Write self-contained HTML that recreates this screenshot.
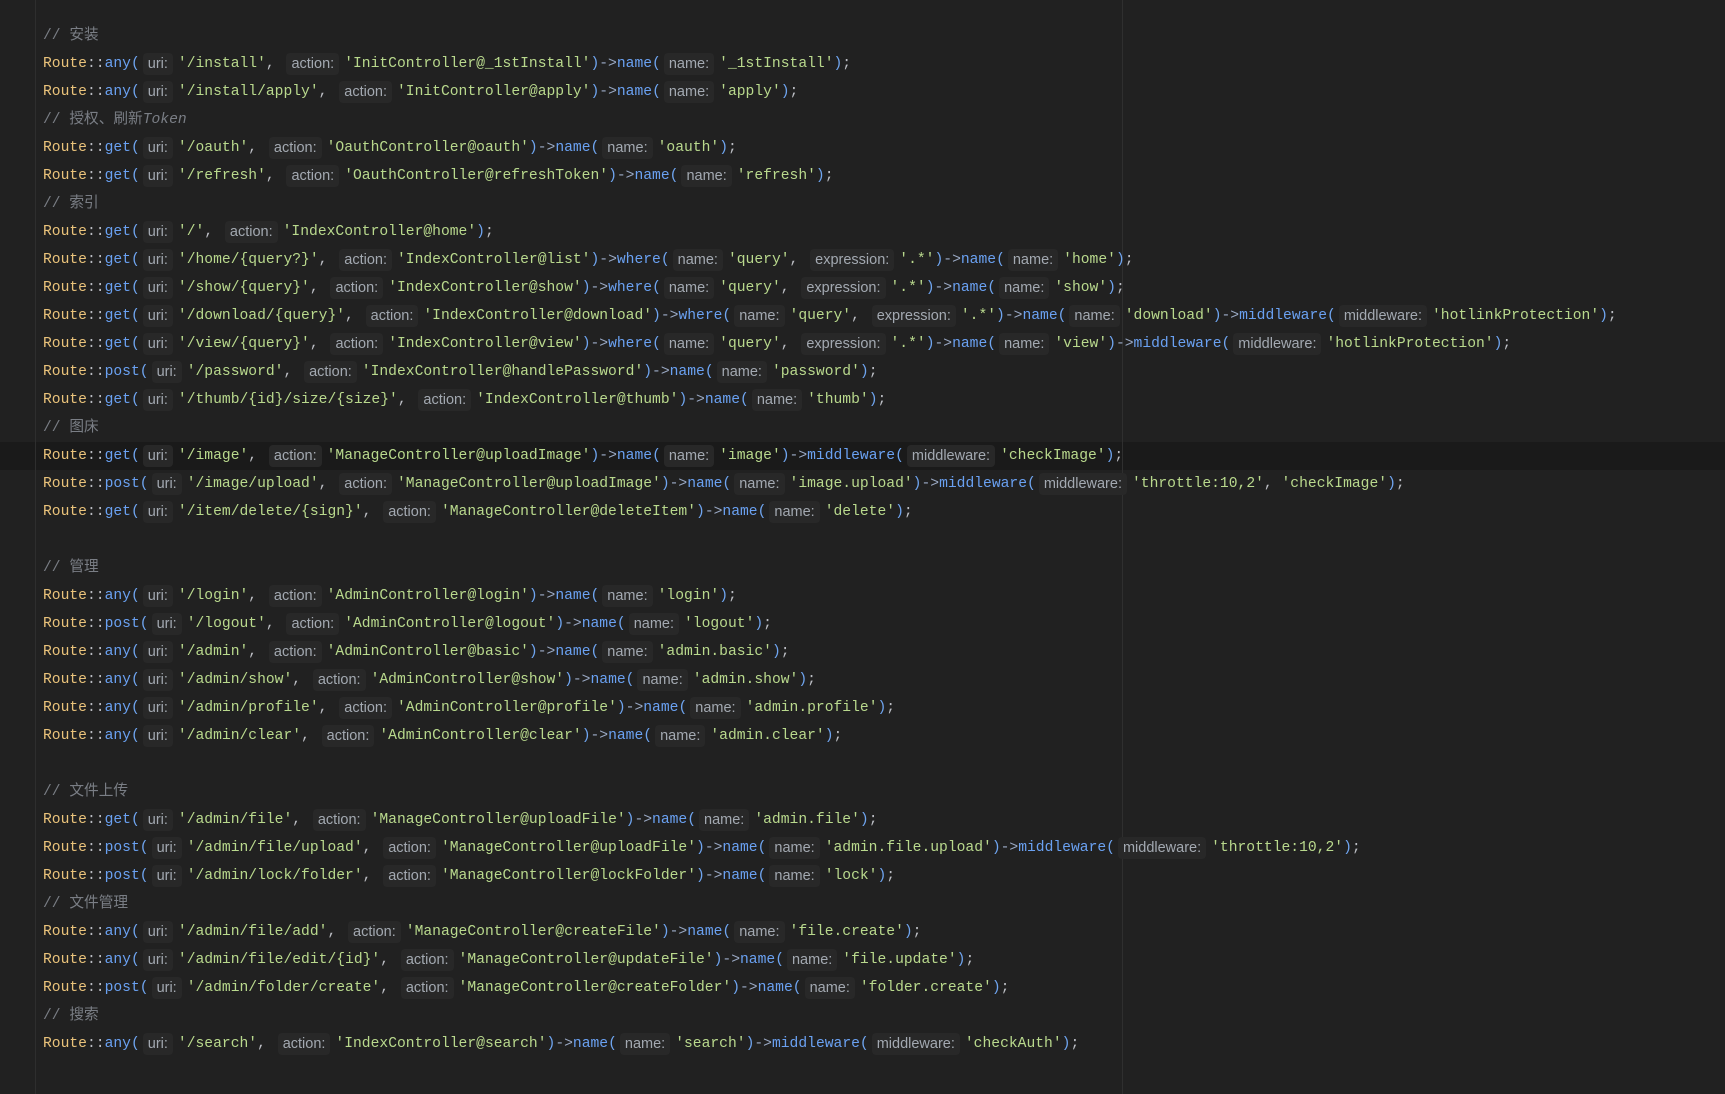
<!DOCTYPE html>
<html><head><meta charset="utf-8"><style>
html,body{margin:0;padding:0;background:#212121;width:1725px;height:1094px;overflow:hidden}
.ed{position:relative;width:1725px;height:1094px;background:#212121}
.gut{position:absolute;left:35px;top:0;width:1px;height:1094px;background:#2e2e2e}
.rm{position:absolute;left:1122px;top:0;width:1px;height:1094px;background:#2f2f2f}
.hl{position:absolute;left:0;top:442px;width:1725px;height:28px;background:#1a1a1a}
.l{position:absolute;left:43px;height:28px;line-height:30px;white-space:pre;font-family:"Liberation Mono","Noto Sans CJK SC",monospace;font-size:14.67px;color:#bcbec4}
.y{color:#eac37b}.f{color:#6aa1f2}.p{color:#6fa5f0}.a{color:#9aa9c4}.s{color:#b9d98d}.c{color:#7a7e85}
.c i{font-style:italic}
.cj{font-family:"Liberation Mono","Noto Sans CJK SC",sans-serif}
.h{display:inline-block;font-style:normal;font-family:"Liberation Sans",sans-serif;font-size:14.5px;color:#a3a9b1;background:#282828;border-radius:4px;height:22px;line-height:22px;padding:0 5px;margin:0 5px 0 3px;vertical-align:top;margin-top:4px}
</style></head><body><div class="ed">
<div class="hl"></div><div class="gut"></div><div class="rm"></div>
<div class="l c" style="top:21px">// <span class="cj">安装</span></div>
<div class="l" style="top:49px"><span class="y">Route</span>::<span class="f">any</span><span class="p">(</span><i class="h">uri:</i><span class="s">'/install'</span>, <i class="h">action:</i><span class="s">'InitController@_1stInstall'</span><span class="p">)</span><span class="a">-&gt;</span><span class="f">name</span><span class="p">(</span><i class="h">name:</i><span class="s">'_1stInstall'</span><span class="p">)</span>;</div>
<div class="l" style="top:77px"><span class="y">Route</span>::<span class="f">any</span><span class="p">(</span><i class="h">uri:</i><span class="s">'/install/apply'</span>, <i class="h">action:</i><span class="s">'InitController@apply'</span><span class="p">)</span><span class="a">-&gt;</span><span class="f">name</span><span class="p">(</span><i class="h">name:</i><span class="s">'apply'</span><span class="p">)</span>;</div>
<div class="l c" style="top:105px">// <span class="cj">授权、刷新</span><i>Token</i></div>
<div class="l" style="top:133px"><span class="y">Route</span>::<span class="f">get</span><span class="p">(</span><i class="h">uri:</i><span class="s">'/oauth'</span>, <i class="h">action:</i><span class="s">'OauthController@oauth'</span><span class="p">)</span><span class="a">-&gt;</span><span class="f">name</span><span class="p">(</span><i class="h">name:</i><span class="s">'oauth'</span><span class="p">)</span>;</div>
<div class="l" style="top:161px"><span class="y">Route</span>::<span class="f">get</span><span class="p">(</span><i class="h">uri:</i><span class="s">'/refresh'</span>, <i class="h">action:</i><span class="s">'OauthController@refreshToken'</span><span class="p">)</span><span class="a">-&gt;</span><span class="f">name</span><span class="p">(</span><i class="h">name:</i><span class="s">'refresh'</span><span class="p">)</span>;</div>
<div class="l c" style="top:189px">// <span class="cj">索引</span></div>
<div class="l" style="top:217px"><span class="y">Route</span>::<span class="f">get</span><span class="p">(</span><i class="h">uri:</i><span class="s">'/'</span>, <i class="h">action:</i><span class="s">'IndexController@home'</span><span class="p">)</span>;</div>
<div class="l" style="top:245px"><span class="y">Route</span>::<span class="f">get</span><span class="p">(</span><i class="h">uri:</i><span class="s">'/home/{query?}'</span>, <i class="h">action:</i><span class="s">'IndexController@list'</span><span class="p">)</span><span class="a">-&gt;</span><span class="f">where</span><span class="p">(</span><i class="h">name:</i><span class="s">'query'</span>, <i class="h">expression:</i><span class="s">'.*'</span><span class="p">)</span><span class="a">-&gt;</span><span class="f">name</span><span class="p">(</span><i class="h">name:</i><span class="s">'home'</span><span class="p">)</span>;</div>
<div class="l" style="top:273px"><span class="y">Route</span>::<span class="f">get</span><span class="p">(</span><i class="h">uri:</i><span class="s">'/show/{query}'</span>, <i class="h">action:</i><span class="s">'IndexController@show'</span><span class="p">)</span><span class="a">-&gt;</span><span class="f">where</span><span class="p">(</span><i class="h">name:</i><span class="s">'query'</span>, <i class="h">expression:</i><span class="s">'.*'</span><span class="p">)</span><span class="a">-&gt;</span><span class="f">name</span><span class="p">(</span><i class="h">name:</i><span class="s">'show'</span><span class="p">)</span>;</div>
<div class="l" style="top:301px"><span class="y">Route</span>::<span class="f">get</span><span class="p">(</span><i class="h">uri:</i><span class="s">'/download/{query}'</span>, <i class="h">action:</i><span class="s">'IndexController@download'</span><span class="p">)</span><span class="a">-&gt;</span><span class="f">where</span><span class="p">(</span><i class="h">name:</i><span class="s">'query'</span>, <i class="h">expression:</i><span class="s">'.*'</span><span class="p">)</span><span class="a">-&gt;</span><span class="f">name</span><span class="p">(</span><i class="h">name:</i><span class="s">'download'</span><span class="p">)</span><span class="a">-&gt;</span><span class="f">middleware</span><span class="p">(</span><i class="h">middleware:</i><span class="s">'hotlinkProtection'</span><span class="p">)</span>;</div>
<div class="l" style="top:329px"><span class="y">Route</span>::<span class="f">get</span><span class="p">(</span><i class="h">uri:</i><span class="s">'/view/{query}'</span>, <i class="h">action:</i><span class="s">'IndexController@view'</span><span class="p">)</span><span class="a">-&gt;</span><span class="f">where</span><span class="p">(</span><i class="h">name:</i><span class="s">'query'</span>, <i class="h">expression:</i><span class="s">'.*'</span><span class="p">)</span><span class="a">-&gt;</span><span class="f">name</span><span class="p">(</span><i class="h">name:</i><span class="s">'view'</span><span class="p">)</span><span class="a">-&gt;</span><span class="f">middleware</span><span class="p">(</span><i class="h">middleware:</i><span class="s">'hotlinkProtection'</span><span class="p">)</span>;</div>
<div class="l" style="top:357px"><span class="y">Route</span>::<span class="f">post</span><span class="p">(</span><i class="h">uri:</i><span class="s">'/password'</span>, <i class="h">action:</i><span class="s">'IndexController@handlePassword'</span><span class="p">)</span><span class="a">-&gt;</span><span class="f">name</span><span class="p">(</span><i class="h">name:</i><span class="s">'password'</span><span class="p">)</span>;</div>
<div class="l" style="top:385px"><span class="y">Route</span>::<span class="f">get</span><span class="p">(</span><i class="h">uri:</i><span class="s">'/thumb/{id}/size/{size}'</span>, <i class="h">action:</i><span class="s">'IndexController@thumb'</span><span class="p">)</span><span class="a">-&gt;</span><span class="f">name</span><span class="p">(</span><i class="h">name:</i><span class="s">'thumb'</span><span class="p">)</span>;</div>
<div class="l c" style="top:413px">// <span class="cj">图床</span></div>
<div class="l" style="top:441px"><span class="y">Route</span>::<span class="f">get</span><span class="p">(</span><i class="h">uri:</i><span class="s">'/image'</span>, <i class="h">action:</i><span class="s">'ManageController@uploadImage'</span><span class="p">)</span><span class="a">-&gt;</span><span class="f">name</span><span class="p">(</span><i class="h">name:</i><span class="s">'image'</span><span class="p">)</span><span class="a">-&gt;</span><span class="f">middleware</span><span class="p">(</span><i class="h">middleware:</i><span class="s">'checkImage'</span><span class="p">)</span>;</div>
<div class="l" style="top:469px"><span class="y">Route</span>::<span class="f">post</span><span class="p">(</span><i class="h">uri:</i><span class="s">'/image/upload'</span>, <i class="h">action:</i><span class="s">'ManageController@uploadImage'</span><span class="p">)</span><span class="a">-&gt;</span><span class="f">name</span><span class="p">(</span><i class="h">name:</i><span class="s">'image.upload'</span><span class="p">)</span><span class="a">-&gt;</span><span class="f">middleware</span><span class="p">(</span><i class="h">middleware:</i><span class="s">'throttle:10,2'</span>, <span class="s">'checkImage'</span><span class="p">)</span>;</div>
<div class="l" style="top:497px"><span class="y">Route</span>::<span class="f">get</span><span class="p">(</span><i class="h">uri:</i><span class="s">'/item/delete/{sign}'</span>, <i class="h">action:</i><span class="s">'ManageController@deleteItem'</span><span class="p">)</span><span class="a">-&gt;</span><span class="f">name</span><span class="p">(</span><i class="h">name:</i><span class="s">'delete'</span><span class="p">)</span>;</div>
<div class="l c" style="top:553px">// <span class="cj">管理</span></div>
<div class="l" style="top:581px"><span class="y">Route</span>::<span class="f">any</span><span class="p">(</span><i class="h">uri:</i><span class="s">'/login'</span>, <i class="h">action:</i><span class="s">'AdminController@login'</span><span class="p">)</span><span class="a">-&gt;</span><span class="f">name</span><span class="p">(</span><i class="h">name:</i><span class="s">'login'</span><span class="p">)</span>;</div>
<div class="l" style="top:609px"><span class="y">Route</span>::<span class="f">post</span><span class="p">(</span><i class="h">uri:</i><span class="s">'/logout'</span>, <i class="h">action:</i><span class="s">'AdminController@logout'</span><span class="p">)</span><span class="a">-&gt;</span><span class="f">name</span><span class="p">(</span><i class="h">name:</i><span class="s">'logout'</span><span class="p">)</span>;</div>
<div class="l" style="top:637px"><span class="y">Route</span>::<span class="f">any</span><span class="p">(</span><i class="h">uri:</i><span class="s">'/admin'</span>, <i class="h">action:</i><span class="s">'AdminController@basic'</span><span class="p">)</span><span class="a">-&gt;</span><span class="f">name</span><span class="p">(</span><i class="h">name:</i><span class="s">'admin.basic'</span><span class="p">)</span>;</div>
<div class="l" style="top:665px"><span class="y">Route</span>::<span class="f">any</span><span class="p">(</span><i class="h">uri:</i><span class="s">'/admin/show'</span>, <i class="h">action:</i><span class="s">'AdminController@show'</span><span class="p">)</span><span class="a">-&gt;</span><span class="f">name</span><span class="p">(</span><i class="h">name:</i><span class="s">'admin.show'</span><span class="p">)</span>;</div>
<div class="l" style="top:693px"><span class="y">Route</span>::<span class="f">any</span><span class="p">(</span><i class="h">uri:</i><span class="s">'/admin/profile'</span>, <i class="h">action:</i><span class="s">'AdminController@profile'</span><span class="p">)</span><span class="a">-&gt;</span><span class="f">name</span><span class="p">(</span><i class="h">name:</i><span class="s">'admin.profile'</span><span class="p">)</span>;</div>
<div class="l" style="top:721px"><span class="y">Route</span>::<span class="f">any</span><span class="p">(</span><i class="h">uri:</i><span class="s">'/admin/clear'</span>, <i class="h">action:</i><span class="s">'AdminController@clear'</span><span class="p">)</span><span class="a">-&gt;</span><span class="f">name</span><span class="p">(</span><i class="h">name:</i><span class="s">'admin.clear'</span><span class="p">)</span>;</div>
<div class="l c" style="top:777px">// <span class="cj">文件上传</span></div>
<div class="l" style="top:805px"><span class="y">Route</span>::<span class="f">get</span><span class="p">(</span><i class="h">uri:</i><span class="s">'/admin/file'</span>, <i class="h">action:</i><span class="s">'ManageController@uploadFile'</span><span class="p">)</span><span class="a">-&gt;</span><span class="f">name</span><span class="p">(</span><i class="h">name:</i><span class="s">'admin.file'</span><span class="p">)</span>;</div>
<div class="l" style="top:833px"><span class="y">Route</span>::<span class="f">post</span><span class="p">(</span><i class="h">uri:</i><span class="s">'/admin/file/upload'</span>, <i class="h">action:</i><span class="s">'ManageController@uploadFile'</span><span class="p">)</span><span class="a">-&gt;</span><span class="f">name</span><span class="p">(</span><i class="h">name:</i><span class="s">'admin.file.upload'</span><span class="p">)</span><span class="a">-&gt;</span><span class="f">middleware</span><span class="p">(</span><i class="h">middleware:</i><span class="s">'throttle:10,2'</span><span class="p">)</span>;</div>
<div class="l" style="top:861px"><span class="y">Route</span>::<span class="f">post</span><span class="p">(</span><i class="h">uri:</i><span class="s">'/admin/lock/folder'</span>, <i class="h">action:</i><span class="s">'ManageController@lockFolder'</span><span class="p">)</span><span class="a">-&gt;</span><span class="f">name</span><span class="p">(</span><i class="h">name:</i><span class="s">'lock'</span><span class="p">)</span>;</div>
<div class="l c" style="top:889px">// <span class="cj">文件管理</span></div>
<div class="l" style="top:917px"><span class="y">Route</span>::<span class="f">any</span><span class="p">(</span><i class="h">uri:</i><span class="s">'/admin/file/add'</span>, <i class="h">action:</i><span class="s">'ManageController@createFile'</span><span class="p">)</span><span class="a">-&gt;</span><span class="f">name</span><span class="p">(</span><i class="h">name:</i><span class="s">'file.create'</span><span class="p">)</span>;</div>
<div class="l" style="top:945px"><span class="y">Route</span>::<span class="f">any</span><span class="p">(</span><i class="h">uri:</i><span class="s">'/admin/file/edit/{id}'</span>, <i class="h">action:</i><span class="s">'ManageController@updateFile'</span><span class="p">)</span><span class="a">-&gt;</span><span class="f">name</span><span class="p">(</span><i class="h">name:</i><span class="s">'file.update'</span><span class="p">)</span>;</div>
<div class="l" style="top:973px"><span class="y">Route</span>::<span class="f">post</span><span class="p">(</span><i class="h">uri:</i><span class="s">'/admin/folder/create'</span>, <i class="h">action:</i><span class="s">'ManageController@createFolder'</span><span class="p">)</span><span class="a">-&gt;</span><span class="f">name</span><span class="p">(</span><i class="h">name:</i><span class="s">'folder.create'</span><span class="p">)</span>;</div>
<div class="l c" style="top:1001px">// <span class="cj">搜索</span></div>
<div class="l" style="top:1029px"><span class="y">Route</span>::<span class="f">any</span><span class="p">(</span><i class="h">uri:</i><span class="s">'/search'</span>, <i class="h">action:</i><span class="s">'IndexController@search'</span><span class="p">)</span><span class="a">-&gt;</span><span class="f">name</span><span class="p">(</span><i class="h">name:</i><span class="s">'search'</span><span class="p">)</span><span class="a">-&gt;</span><span class="f">middleware</span><span class="p">(</span><i class="h">middleware:</i><span class="s">'checkAuth'</span><span class="p">)</span>;</div>
</div></body></html>
